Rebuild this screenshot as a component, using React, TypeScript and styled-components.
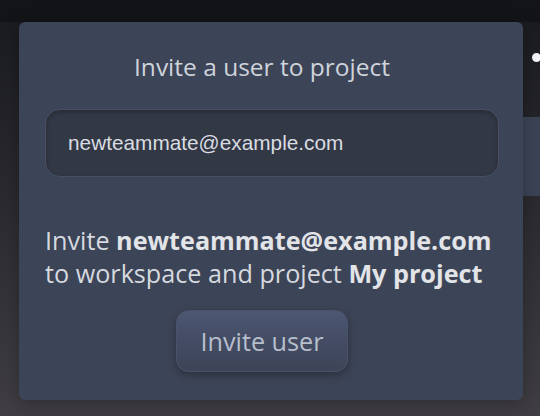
import React from 'react'
import styled, { createGlobalStyle } from 'styled-components'

const GlobalStyle = createGlobalStyle`
  html, body {
    margin: 0;
    padding: 0;
    width: 540px;
    height: 416px;
    overflow: hidden;
    background: #131418;
  }
  * {
    box-sizing: border-box;
  }
`

const Page = styled.div`
  position: relative;
  width: 540px;
  height: 416px;
  display: flex;
  flex-direction: column;
  font-family: 'Open Sans', 'Noto Sans', sans-serif;
`

const TopBar = styled.div`
  height: 22px;
  background: #131418;
  flex-shrink: 0;
`

const Body = styled.div`
  flex: 1;
  background: linear-gradient(180deg, #1b1c20 0%, #2a2a2f 45%, #403e43 100%);
  display: flex;
  justify-content: flex-end;
`

const SideColumn = styled.div`
  width: 17px;
  display: flex;
  flex-direction: column;
  padding-top: 31px;
`

const StatusDot = styled.span`
  display: block;
  width: 9px;
  height: 9px;
  margin-left: 9px;
  border-radius: 50%;
  background: #f4f6fa;
`

const SideBar = styled.div`
  margin-top: 55px;
  height: 79px;
  background: #3b4356;
`

const Modal = styled.div`
  position: absolute;
  top: 22px;
  left: 19px;
  width: 504px;
  height: 378px;
  background: #3c4457;
  border-radius: 6px;
  padding: 28px 24px 28px 26px;
  display: flex;
  flex-direction: column;
  box-shadow: 0 4px 18px rgba(0, 0, 0, 0.25);
`

const Title = styled.h2`
  margin: 0;
  padding-right: 20px;
  font-size: 24.5px;
  font-weight: 400;
  line-height: 34px;
  text-align: center;
  color: #cfd3db;
`

const EmailInput = styled.input`
  margin-top: 25px;
  height: 68px;
  width: 100%;
  border-radius: 15px;
  border: 1px solid #465064;
  background: #333845;
  box-shadow: inset 0 2px 4px rgba(0, 0, 0, 0.28);
  padding: 0 22px;
  font-family: 'Liberation Sans', Arial, sans-serif;
  font-size: 20.8px;
  color: #d9dce2;
  outline: none;
`

const Description = styled.p`
  margin: 47px 0 0;
  font-size: 25.2px;
  line-height: 33px;
  color: #d6d9df;

  strong {
    font-weight: 700;
    color: #e2e4e8;
  }
`

const Actions = styled.div`
  margin-top: 20px;
  display: flex;
  justify-content: center;
  padding-right: 20px;
`

const InviteButton = styled.button`
  height: 62px;
  padding: 0 24px;
  border-radius: 13px;
  border: 1px solid #4a5369;
  background: linear-gradient(180deg, #4c5773 0%, #434c63 50%, #3d4458 100%);
  box-shadow: 0 3px 8px rgba(0, 0, 0, 0.3);
  font-family: 'Open Sans', 'Noto Sans', sans-serif;
  font-size: 25.2px;
  color: #b7bfcd;
  cursor: pointer;
`

export default function App() {
  return (
    <>
      <GlobalStyle />
      <Page>
        <TopBar />
        <Body>
          <SideColumn>
            <StatusDot />
            <SideBar />
          </SideColumn>
        </Body>
        <Modal>
          <Title>Invite a user to project</Title>
          <EmailInput defaultValue="newteammate@example.com" />
          <Description>
            Invite <strong>newteammate@example.com</strong> to workspace and project <strong>My project</strong>
          </Description>
          <Actions>
            <InviteButton>Invite user</InviteButton>
          </Actions>
        </Modal>
      </Page>
    </>
  )
}
